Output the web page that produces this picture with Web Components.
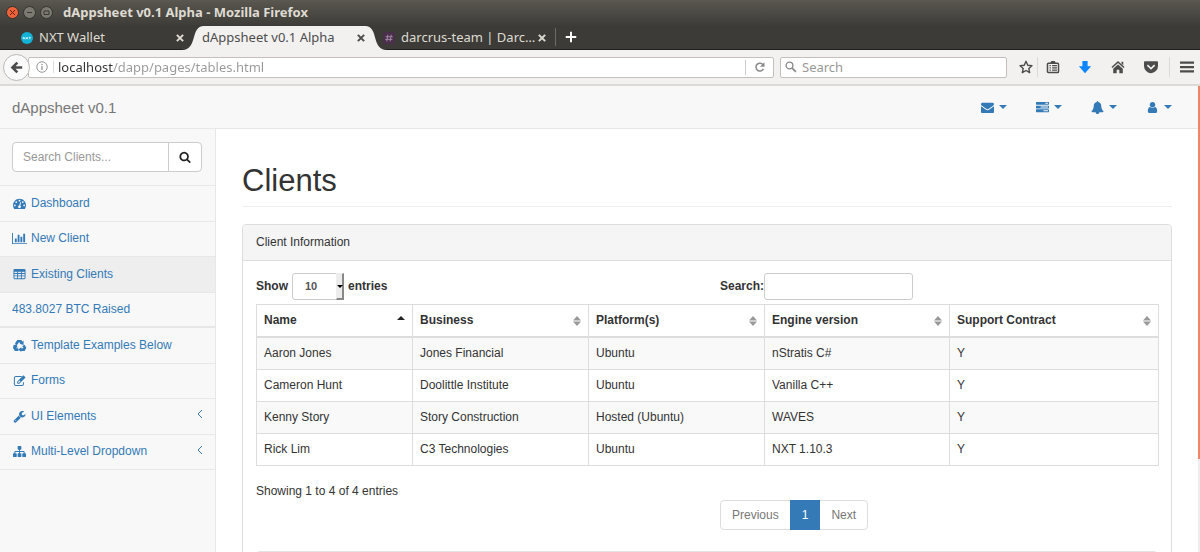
<!DOCTYPE html>
<html lang="en">
<head>
<meta charset="utf-8">
<title>dAppsheet v0.1 Alpha</title>
<style>
    body {
        margin: 0;
        font-family: "Liberation Sans", Arial, sans-serif;
        font-size: 12px;
        line-height: 17px;
        color: #333;
    }
</style>
</head>
<body>
<browser-window>
    <window-title slot="chrome">dAppsheet v0.1 Alpha - Mozilla Firefox</window-title>
    <tab-strip slot="chrome">
        <browser-tab icon="nxt">NXT Wallet</browser-tab>
        <browser-tab active>dAppsheet v0.1 Alpha</browser-tab>
        <browser-tab icon="slack">darcrus-team | Darc…</browser-tab>
    </tab-strip>
    <browser-toolbar slot="chrome" address="localhost/dapp/pages/tables.html"></browser-toolbar>

    <app-navbar>dAppsheet v0.1</app-navbar>
    <app-layout>
        <side-nav slot="side">
            <nav-item icon="dashboard">Dashboard</nav-item>
            <nav-item icon="chart">New Client</nav-item>
            <nav-item icon="table" active>Existing Clients</nav-item>
            <nav-item last>483.8027 BTC Raised</nav-item>
            <nav-item icon="recycle">Template Examples Below</nav-item>
            <nav-item icon="edit">Forms</nav-item>
            <nav-item icon="wrench" expandable>UI Elements</nav-item>
            <nav-item icon="sitemap" expandable>Multi-Level Dropdown</nav-item>
        </side-nav>
        <page-header>Clients</page-header>
        <info-panel>
            <span slot="heading">Client Information</span>
            <client-table></client-table>
        </info-panel>
    </app-layout>
</browser-window>

<script>
const ICONS = {
    envelope: '<path d="M1792 710v794q0 66-47 113t-113 47h-1472q-66 0-113-47t-47-113v-794q44 49 101 87 362 246 497 345 57 42 92.5 65.5t94.5 48 110 24.5h2q51 0 110-24.5t94.5-48 92.5-65.5q170-123 498-345 57-39 100-87zm0-294q0 79-49 151t-122 123q-376 261-468 325-10 7-42.5 31t-54 38.5-52 32.5-57.5 27-50 9h-2q-23 0-50-9t-57.5-27-52-32.5-54-38.5-42.5-31q-91-64-262-182.5t-205-142.5q-62-42-117-115.5t-55-136.5q0-78 41.5-130t118.5-52h1472q65 0 112.5 47t47.5 113z"/>',
    tasks: '<path d="M1024 1408h640v-128h-640v128zm-384-512h1024v-128h-1024v128zm640-512h384v-128h-384v128zm512 832v256q0 26-19 45t-45 19h-1664q-26 0-45-19t-19-45v-256q0-26 19-45t45-19h1664q26 0 45 19t19 45zm0-512v256q0 26-19 45t-45 19h-1664q-26 0-45-19t-19-45v-256q0-26 19-45t45-19h1664q26 0 45 19t19 45zm0-512v256q0 26-19 45t-45 19h-1664q-26 0-45-19t-19-45v-256q0-26 19-45t45-19h1664q26 0 45 19t19 45z"/>',
    bell: '<path d="M1728 1408q0 52-38 90t-90 38h-448q0 106-75 181t-181 75-181-75-75-181h-448q-52 0-90-38t-38-90q50-42 91-88t85-119.5 74.5-158.5 50-206 19.5-260q0-152 117-282.5t307-158.5q-8-19-8-39 0-40 28-68t68-28 68 28 28 68q0 20-8 39 190 28 307 158.5t117 282.5q0 139 19.5 260t50 206 74.5 158.5 85 119.5 91 88z"/>',
    user: '<path d="M1536 1399q0 109-62.5 187t-150.5 78h-854q-88 0-150.5-78t-62.5-187q0-85 8.5-160.5t31.5-152 58.5-131 94-89 134.5-34.5q131 128 313 128t313-128q76 0 134.5 34.5t94 89 58.5 131 31.5 152 8.5 160.5zm-256-887q0 159-112.5 271.5t-271.5 112.5-271.5-112.5-112.5-271.5 112.5-271.5 271.5-112.5 271.5 112.5 112.5 271.5z"/>',
    search: '<path d="M1216 832q0-185-131.5-316.5t-316.5-131.5-316.5 131.5-131.5 316.5 131.5 316.5 316.5 131.5 316.5-131.5 131.5-316.5zm512 832q0 52-38 90t-90 38q-54 0-90-38l-343-342q-179 124-399 124-143 0-273.5-55.5t-225-150-150-225-55.5-273.5 55.5-273.5 150-225 225-150 273.5-55.5 273.5 55.5 225 150 150 225 55.5 273.5q0 220-124 399l343 343q37 37 37 90z"/>',
    dashboard: '<path d="M384 1152q0-53-37.5-90.5t-90.5-37.5-90.5 37.5-37.5 90.5 37.5 90.5 90.5 37.5 90.5-37.5 37.5-90.5zm192-448q0-53-37.5-90.5t-90.5-37.5-90.5 37.5-37.5 90.5 37.5 90.5 90.5 37.5 90.5-37.5 37.5-90.5zm428 481l101-382q6-26-7.5-48.5t-38.5-29.5-48 6.5-30 39.5l-101 382q-60 5-107 43.5t-63 98.5q-20 77 20 146t117 89 146-20 89-117q16-60-6-117t-72-91zm660-33q0-53-37.5-90.5t-90.5-37.5-90.5 37.5-37.5 90.5 37.5 90.5 90.5 37.5 90.5-37.5 37.5-90.5zm-640-640q0-53-37.5-90.5t-90.5-37.5-90.5 37.5-37.5 90.5 37.5 90.5 90.5 37.5 90.5-37.5 37.5-90.5zm448 192q0-53-37.5-90.5t-90.5-37.5-90.5 37.5-37.5 90.5 37.5 90.5 90.5 37.5 90.5-37.5 37.5-90.5zm320 448q0 261-141 483-19 29-54 29h-1402q-35 0-54-29-141-221-141-483 0-182 71-348t191-286 286-191 348-71 348 71 286 191 191 286 71 348z"/>',
    chart: '<path transform="translate(-128)" d="M640 896v512h-256v-512h256zm384-512v1024h-256v-1024h256zm1024 1152v128h-2048v-1536h128v1408h1920zm-640-896v768h-256v-768h256zm384-384v1152h-256v-1152h256z"/>',
    table: '<path fill-rule="evenodd" d="M224 128h1344q160 0 160 160v1088q0 160-160 160h-1344q-160 0-160-160v-1088q0-160 160-160zM192 512v192h384v-192zM704 512v192h384v-192zM1216 512v192h384v-192zM192 832v192h384v-192zM704 832v192h384v-192zM1216 832v192h384v-192zM192 1152v256h384v-256zM704 1152v256h384v-256zM1216 1152v256h384v-256z"/>',
    recycle: '<g fill="none" stroke="currentColor" stroke-width="360"><path d="M420 720l260-410h360l130 210M1440 880l190 340-130 240h-380M740 1460H360l-170-280 130-220"/></g><path d="M1460 240l0 600-560-180zM1140 1120v680l-400-340zM0 900l520-200 100 560z"/>',
    edit: '<path d="M1200 330H400q-210 0-210 210v830q0 210 210 210h830q210 0 210-210v-250" fill="none" stroke="currentColor" stroke-width="140"/><path d="M1440 180l290 290-860 860h-290v-290zM900 890l-190 190v120h120l190-190z" fill-rule="evenodd"/>',
    wrench: '<path d="M448 1472q0-26-19-45t-45-19-45 19-19 45 19 45 45 19 45-19 19-45zm644-420l-682 682q-37 37-90 37-52 0-91-37l-106-108q-38-36-38-90 0-53 38-91l681-681q39 98 114.5 173.5t173.5 114.5zm634-435q0 39-23 106-47 134-164.5 217.5t-258.5 83.5q-185 0-316.5-131.5t-131.5-316.5 131.5-316.5 316.5-131.5q58 0 121.5 16.5t107.5 46.5q16 11 16 28t-16 28l-293 169v224l193 107q5-3 79-48.5t135.5-81 70.5-35.5q15 0 23.5 10t8.5 25z"/>',
    sitemap: '<path d="M1792 1248v320q0 40-28 68t-68 28h-320q-40 0-68-28t-28-68v-320q0-40 28-68t68-28h96v-192h-512v192h96q40 0 68 28t28 68v320q0 40-28 68t-68 28h-320q-40 0-68-28t-28-68v-320q0-40 28-68t68-28h96v-192h-512v192h96q40 0 68 28t28 68v320q0 40-28 68t-68 28h-320q-40 0-68-28t-28-68v-320q0-40 28-68t68-28h96v-192q0-52 38-90t90-38h512v-192h-96q-40 0-68-28t-28-68v-320q0-40 28-68t68-28h320q40 0 68 28t28 68v320q0 40-28 68t-68 28h-96v192h512q52 0 90 38t38 90v192h96q40 0 68 28t28 68z"/>'
}

// browser chrome glyphs, drawn on a 16 unit grid
const GLYPHS = {
    nxt: '<circle cx="8" cy="8" r="8" fill="#12b2d6"/><path d="M3 9.500V7l2 2.500V7M6.500 7l3 2.500M9.500 7l-3 2.500M10.500 7.300H13M11.800 7.300v2.400" fill="none" stroke="#d9f5fa" stroke-width="1.200"/>',
    slack: '<rect width="16" height="16" rx="2" fill="#4a2f4a"/><path d="M6.500 3.500l-1.500 9M11 3.500l-1.500 9M3.500 6.300h9.500M3 9.800h9.500" fill="none" stroke="#a98fae" stroke-width="1.200"/>',
    close: '<path d="M3 3l10 10M13 3L3 13" fill="none" stroke="currentColor" stroke-width="3.200"/>',
    plus: '<path d="M8 1v14M1 8h14" fill="none" stroke="currentColor" stroke-width="2.600"/>',
    back: '<path d="M15 8H4M9 2L3 8l6 6" fill="none" stroke="currentColor" stroke-width="3.200"/>',
    info: '<circle cx="8" cy="8" r="7" fill="none" stroke="currentColor" stroke-width="1.200"/><path d="M8 7v5M8 4v1.700" stroke="currentColor" stroke-width="1.600"/>',
    reload: '<path d="M12.500 10.500a5.200 5.200 0 1 1-.5-5.500" fill="none" stroke="currentColor" stroke-width="2"/><path d="M14 1.500v6H8z"/>',
    find: '<circle cx="6" cy="6" r="4.500" fill="none" stroke="currentColor" stroke-width="1.800"/><path d="M9.500 9.500l5 5" stroke="currentColor" stroke-width="2.400"/>',
    star: '<path d="M8 1.500l2 4.500 4.800.5-3.600 3.200 1 4.800L8 12l-4.200 2.500 1-4.800L1.200 6.500 6 6z" fill="none" stroke="currentColor" stroke-width="1.600" stroke-linejoin="round"/>',
    clipboard: '<rect x="1.700" y="3.700" width="12.600" height="10.600" rx="1" fill="none" stroke="currentColor" stroke-width="1.700"/><path d="M5 3.500l1-2.500h4l1 2.500z"/><path d="M4 6.500h1.500M7 6.500h5.500M4 9h1.500M7 9h5.500M4 11.500h1.500M7 11.500h5.500" stroke="currentColor" stroke-width="1.300"/>',
    download: '<path d="M5 1h6v6h4l-7 8-7-8h4z"/>',
    home: '<path d="M8 1l7.500 7-1.200 1.200L8 3.500 1.700 9.200.5 8zM12 2h2v4l-2-2zM8 5l5.500 5v5h-4v-4h-3v4h-4v-5z"/>',
    pocket: '<path fill-rule="evenodd" d="M1 1.500h14q1 0 1 1V7q0 3.500-2.500 5.500T8 15q-3 0-5.500-2.500T0 7V2.500q0-1 1-1zM3.200 6.500L8 11.200l4.800-4.700-1.300-1.300L8 8.500 4.500 5.200z"/>',
    menu: '<path d="M0 1.800h16v2.600H0zM0 6.800h16v2.600H0zM0 11.800h16v2.600H0z"/>'
}

class AppIcon extends HTMLElement {
    connectedCallback () {
        const name = this.getAttribute("name")
        const fa = name in ICONS
        this.attachShadow({mode: "open"}).innerHTML =
        `
        <style>
            :host {
                display: inline-block;
                flex: none;
                width: 12px;
                height: 12px;
            }
            svg {
                display: block;
                width: 100%;
                height: 100%;
                overflow: visible;
                fill: currentColor;
            }
        </style>
        <svg viewBox="${fa ? "0 0 1792 1792" : "0 0 16 16"}" aria-hidden="true">${fa ? ICONS[name] : GLYPHS[name]}</svg>
        `
    }
}

class BrowserWindow extends HTMLElement {
    constructor () {
        super()
        this.attachShadow({mode: "open"}).innerHTML =
        `
        <style>
            :host {
                display: flex;
                flex-direction: column;
                height: 100vh;
                overflow: hidden;
                background: #3c3b37;
            }
            .viewport {
                flex: 1;
                min-height: 0;
                display: grid;
                grid-template-columns: 1fr 2px;
                background: #fff;
            }
            .page {
                display: flex;
                flex-direction: column;
                min-height: 0;
                overflow: hidden;
            }
            .rail {
                background: #eee;
            }
            .thumb {
                height: 80%;
                background: #ee8567;
            }
        </style>
        <slot name="chrome"></slot>
        <div class="viewport">
            <div class="page"><slot></slot></div>
            <div class="rail"><div class="thumb"></div></div>
        </div>
        `
    }
}

class WindowTitle extends HTMLElement {
    constructor () {
        super()
        this.attachShadow({mode: "open"}).innerHTML =
        `
        <style>
            :host {
                display: flex;
                align-items: center;
                gap: 4px;
                height: 25px;
                padding-left: 6px;
                background: linear-gradient(#5b5a52, #57554d 8%, #3e3d39);
                color: #dfdbd2;
                font: bold 13px/25px "Noto Sans", sans-serif;
            }
            button {
                width: 13px;
                height: 13px;
                padding: 0;
                border: 1px solid #33322e;
                border-radius: 50%;
                background: #7b7970;
                color: #3a3935;
            }
            button.close {
                background: #ee6239;
                color: #6b1f08;
            }
            svg {
                display: block;
                fill: none;
                stroke: currentColor;
            }
            span {
                margin-left: 6px;
            }
        </style>
        <button class="close" aria-label="Close"><svg viewBox="0 0 11 11"><path d="M3 3l5 5M8 3L3 8"/></svg></button>
        <button aria-label="Minimize"><svg viewBox="0 0 11 11"><path d="M3 5.500h5"/></svg></button>
        <button aria-label="Maximize"><svg viewBox="0 0 11 11"><path d="M3 4h5v3.500H3z"/></svg></button>
        <span><slot></slot></span>
        `
    }
}

class TabStrip extends HTMLElement {
    constructor () {
        super()
        this.attachShadow({mode: "open"}).innerHTML =
        `
        <style>
            :host {
                display: flex;
                height: 24px;
                padding-left: 9px;
                border-bottom: 1px solid #21201d;
                background: #3c3b37;
                color: #dfdbd2;
                font: 13px/25px "Noto Sans", sans-serif;
            }
            button {
                display: flex;
                align-items: center;
                margin: 3px 0 3px 3px;
                padding: 0 9px;
                border: 0;
                border-left: 1px solid #6d6b65;
                background: none;
                color: #fff;
            }
        </style>
        <slot></slot>
        <button aria-label="New tab"><app-icon name="plus"></app-icon></button>
        `
    }
}

class BrowserTab extends HTMLElement {
    connectedCallback () {
        const icon = this.getAttribute("icon")
        this.attachShadow({mode: "open"}).innerHTML =
        `
        <style>
            :host {
                position: relative;
                display: flex;
                align-items: center;
                box-sizing: border-box;
                width: 181px;
                height: 25px;
                padding: 0 5px 0 12px;
            }
            :host([active]) {
                color: #4c4c4c;
                z-index: 1;
            }
            .icon {
                margin-right: 6px;
            }
            .label {
                flex: 1;
                overflow: hidden;
                white-space: nowrap;
            }
            button {
                display: flex;
                padding: 0;
                border: 0;
                background: none;
                color: inherit;
            }
            button app-icon {
                width: 10px;
                height: 10px;
            }
            /* tab shape: flat middle with a curved svg on either end */
            .shape {
                display: none;
                position: absolute;
                z-index: -1;
                inset: 0 -16px 0 -8px;
            }
            :host([active]) .shape {
                display: flex;
            }
            .shape svg {
                width: 22px;
                height: 25px;
                fill: #f2f1f0;
            }
            .shape i {
                flex: 1;
                margin: 1px -1px 0;
                background: #f2f1f0;
            }
        </style>
        <span class="shape">
            <svg viewBox="0 0 22 25"><path d="M22 1C8 1 16 25 0 25h22z"/></svg>
            <i></i>
            <svg viewBox="0 0 22 25"><path d="M0 1C14 1 6 25 22 25H0z"/></svg>
        </span>
        ${icon ? `<app-icon class="icon" name="${icon}"></app-icon>` : ""}
        <span class="label"><slot></slot></span>
        <button aria-label="Close tab"><app-icon name="close"></app-icon></button>
        `
    }
}

class BrowserToolbar extends HTMLElement {
    connectedCallback () {
        this.attachShadow({mode: "open"}).innerHTML =
        `
        <style>
            :host {
                display: flex;
                align-items: center;
                height: 34px;
                padding: 0 1px 0 3px;
                border-bottom: 2px solid #dcdad7;
                background: #f2f1f0;
                color: #4c4c4c;
                font: 13px/19px "Noto Sans", sans-serif;
            }
            button {
                display: flex;
                align-items: center;
                justify-content: center;
                padding: 0;
                border: 0;
                background: none;
                color: inherit;
            }
            input {
                flex: 1;
                min-width: 0;
                padding: 0;
                border: 0;
                outline: 0;
                background: none;
                font: inherit;
            }
            input::placeholder {
                color: #999;
            }
            .back {
                z-index: 1;
                width: 27px;
                height: 27px;
                border: 1px solid #bbb8b4;
                border-radius: 50%;
                background: #fafafa;
            }
            .back app-icon {
                width: 13px;
                height: 13px;
            }
            .field {
                display: flex;
                align-items: center;
                box-sizing: border-box;
                height: 21px;
                border: 1px solid #c3c0bc;
                border-radius: 2px;
                background: #fff;
            }
            .address {
                flex: 3;
                gap: 4px;
                margin: 0 6px 0 -2px;
                padding-left: 7px;
                color: #8a8a8a;
            }
            /* the host part of the address is darker than its path */
            .address input {
                color: transparent;
                background: linear-gradient(90deg, #333 55px, #999 55px);
                background-clip: text;
                -webkit-background-clip: text;
            }
            .info {
                padding-right: 5px;
                border-right: 1px solid #ddd;
            }
            .reload {
                width: 28px;
                height: 15px;
                border-left: 1px solid #ccc;
            }
            .find {
                flex: 0 1 227px;
                gap: 5px;
                padding: 0 4px;
                color: #8a8a8a;
            }
            .tools {
                display: flex;
                align-items: center;
                margin-left: 8px;
            }
            .tools button {
                width: 33px;
                height: 20px;
            }
            .tools app-icon {
                width: 14px;
                height: 14px;
            }
            .tools .star {
                width: 23px;
                border-right: 1px solid #dcdad7;
            }
            .tools .clip {
                width: 30px;
            }
            .tools .menu {
                margin-left: 2px;
                width: 30px;
                border-left: 1px solid #dcdad7;
                padding-left: 5px;
            }
            .download {
                color: #0a84ff;
            }
        </style>
        <button class="back" aria-label="Back"><app-icon name="back"></app-icon></button>
        <div class="field address">
            <button class="info" aria-label="Site information"><app-icon name="info"></app-icon></button>
            <input type="text" aria-label="Address" value="${this.getAttribute("address")}">
            <button class="reload" aria-label="Reload"><app-icon name="reload"></app-icon></button>
        </div>
        <div class="field find">
            <app-icon name="find"></app-icon>
            <input type="text" aria-label="Web search" placeholder="Search">
        </div>
        <div class="tools">
            <button class="star" aria-label="Bookmark"><app-icon name="star"></app-icon></button>
            <button class="clip" aria-label="Bookmarks list"><app-icon name="clipboard"></app-icon></button>
            <button class="download" aria-label="Downloads"><app-icon name="download"></app-icon></button>
            <button aria-label="Home"><app-icon name="home"></app-icon></button>
            <button aria-label="Pocket"><app-icon name="pocket"></app-icon></button>
            <button class="menu" aria-label="Menu"><app-icon name="menu"></app-icon></button>
        </div>
        `
    }
}

class AppNavbar extends HTMLElement {
    constructor () {
        super()
        this.attachShadow({mode: "open"}).innerHTML =
        `
        <style>
            :host {
                display: flex;
                align-items: center;
                justify-content: space-between;
                height: 42px;
                padding: 0 13px 0 12px;
                border-bottom: 1px solid #e7e7e7;
                background: #f8f8f8;
            }
            .brand {
                color: #777;
                font-size: 15px;
                text-decoration: none;
            }
            nav {
                display: flex;
                gap: 3px;
            }
            nav button {
                display: flex;
                align-items: center;
                gap: 5px;
                padding: 13px;
                border: 0;
                background: none;
                color: #337ab7;
            }
            nav app-icon {
                width: 13px;
                height: 13px;
            }
            nav button::after {
                content: "";
                border: 4px solid transparent;
                border-top-color: currentColor;
                border-bottom: 0;
            }
        </style>
        <a class="brand" href="#"><slot></slot></a>
        <nav>
            <button aria-label="Messages"><app-icon name="envelope"></app-icon></button>
            <button aria-label="Tasks"><app-icon name="tasks"></app-icon></button>
            <button aria-label="Alerts"><app-icon name="bell"></app-icon></button>
            <button aria-label="Account"><app-icon name="user"></app-icon></button>
        </nav>
        `
    }
}

class AppLayout extends HTMLElement {
    constructor () {
        super()
        this.attachShadow({mode: "open"}).innerHTML =
        `
        <style>
            :host {
                flex: 1;
                display: grid;
                grid-template-columns: 216px 1fr;
                min-height: 0;
            }
            aside {
                background: #f8f8f8;
                border-right: 1px solid #e7e7e7;
            }
            main {
                min-width: 0;
                padding: 0 26px;
                overflow: hidden;
            }
        </style>
        <aside><slot name="side"></slot></aside>
        <main><slot></slot></main>
        `
    }
}

class SideNav extends HTMLElement {
    constructor () {
        super()
        this.attachShadow({mode: "open"}).innerHTML =
        `
        <style>
            :host {
                display: block;
            }
            form {
                display: flex;
                padding: 13px 13px 13px 12px;
                border-bottom: 1px solid #e7e7e7;
            }
            input {
                flex: 1;
                min-width: 0;
                box-sizing: border-box;
                height: 30px;
                padding: 0 10px;
                border: 1px solid #ccc;
                border-radius: 4px 0 0 4px;
                background: #fff;
                font: inherit;
            }
            input::placeholder {
                color: #999;
            }
            button {
                display: grid;
                place-items: center;
                width: 34px;
                margin-left: -1px;
                padding: 0;
                border: 1px solid #ccc;
                border-radius: 0 4px 4px 0;
                background: #fff;
                color: #222;
            }
            nav {
                display: grid;
                grid-auto-rows: 1fr;
                min-height: 284px;
            }
        </style>
        <form>
            <input type="text" placeholder="Search Clients..." aria-label="Search Clients">
            <button type="button" aria-label="Search"><app-icon name="search"></app-icon></button>
        </form>
        <nav><slot></slot></nav>
        `
    }
}

class NavItem extends HTMLElement {
    connectedCallback () {
        const icon = this.getAttribute("icon")
        this.attachShadow({mode: "open"}).innerHTML =
        `
        <style>
            :host {
                display: block;
                border-bottom: 1px solid #e7e7e7;
            }
            :host([last]) {
                border-bottom-width: 2px;
            }
            a {
                display: flex;
                align-items: center;
                gap: 5px;
                box-sizing: border-box;
                height: 100%;
                padding: 0 12px;
                color: #337ab7;
                text-decoration: none;
            }
            :host([active]) a {
                background: #eee;
            }
            app-icon {
                width: 13px;
                height: 13px;
                margin-left: 1px;
            }
            .arrow {
                width: 4px;
                height: 8px;
                margin: 0 1px 4px auto;
                fill: none;
                stroke: currentColor;
            }
        </style>
        <a href="#">
            ${icon ? `<app-icon name="${icon}"></app-icon>` : ""}
            <span><slot></slot></span>
            ${this.hasAttribute("expandable") ? '<svg class="arrow" viewBox="0 0 4 8"><path d="M4 0L0 4l4 4"/></svg>' : ""}
        </a>
        `
    }
}

class PageHeader extends HTMLElement {
    constructor () {
        super()
        this.attachShadow({mode: "open"}).innerHTML =
        `
        <style>
            :host {
                display: block;
                margin: 35px 0 17px;
                padding-bottom: 8px;
                border-bottom: 1px solid #eee;
            }
            h1 {
                margin: 0;
                font-size: 31px;
                font-weight: 500;
                line-height: 34px;
            }
        </style>
        <h1><slot></slot></h1>
        `
    }
}

class InfoPanel extends HTMLElement {
    constructor () {
        super()
        this.attachShadow({mode: "open"}).innerHTML =
        `
        <style>
            :host {
                display: block;
                border: 1px solid #ddd;
                border-radius: 4px;
                background: #fff;
            }
            header {
                padding: 9px 13px;
                border-bottom: 1px solid #ddd;
                border-radius: 3px 3px 0 0;
                background: #f5f5f5;
            }
            .body {
                padding: 12px 13px;
            }
            .well {
                min-height: 80px;
                margin-top: 21px;
                border: 1px solid #e3e3e3;
                border-radius: 4px;
                background: #f5f5f5;
            }
        </style>
        <header><slot name="heading"></slot></header>
        <div class="body">
            <slot></slot>
            <div class="well"></div>
        </div>
        `
    }
}

class ClientTable extends HTMLElement {
    constructor () {
        super()
        this.columns = ["Name", "Business", "Platform(s)", "Engine version", "Support Contract"]
        this.widths = [156, 176, 176, 185, 209]
        this.rows = [
            ["Aaron Jones", "Jones Financial", "Ubuntu", "nStratis C#", "Y"],
            ["Cameron Hunt", "Doolittle Institute", "Ubuntu", "Vanilla C++", "Y"],
            ["Kenny Story", "Story Construction", "Hosted (Ubuntu)", "WAVES", "Y"],
            ["Rick Lim", "C3 Technologies", "Ubuntu", "NXT 1.10.3", "Y"]
        ]
        this.root = this.attachShadow({mode: "open"})
    }

    connectedCallback () {
        this.render()
    }

    sortIcon (index) {
        return index === 0
            ? '<svg class="sorted" viewBox="0 0 8 10"><path d="M0 5l4-4 4 4z"/></svg>'
            : '<svg viewBox="0 0 8 10"><path d="M0 4.500L4 0l4 4.500zM0 5.500h8L4 10z"/></svg>'
    }

    render () {
        this.root.innerHTML =
        `
        <style>
            :host {
                display: block;
            }
            .row {
                display: grid;
                grid-template-columns: 1fr 1fr;
                gap: 26px;
            }
            .controls {
                font-weight: bold;
                margin-bottom: 4px;
            }
            .controls > div {
                display: flex;
                align-items: center;
                gap: 4px;
            }
            .controls .filter {
                gap: 0;
            }
            .length {
                display: grid;
            }
            .length > * {
                grid-area: 1 / 1;
            }
            select, input {
                box-sizing: border-box;
                height: 27px;
                border: 1px solid #ccc;
                border-radius: 3px;
                background: #fff;
                color: #555;
                font: inherit;
            }
            select {
                width: 52px;
                padding: 0 12px;
                font-size: 11px;
                appearance: none;
            }
            input {
                width: 149px;
                padding: 0 8px;
            }
            .arrow {
                display: grid;
                place-items: center;
                justify-self: end;
                width: 5px;
                border: 1px solid #eee;
                border-right: 2px solid #888;
                border-bottom: 2px solid #888;
                background: #ececec;
                pointer-events: none;
            }
            .arrow svg {
                width: 6px;
                height: 3px;
                fill: #000;
            }
            table {
                width: 100%;
                table-layout: fixed;
                border-collapse: collapse;
                border: 1px solid #ddd;
            }
            th, td {
                padding: 7px;
                border: 1px solid #ddd;
                text-align: left;
            }
            th {
                border-bottom-width: 2px;
            }
            th button {
                display: flex;
                align-items: center;
                justify-content: space-between;
                width: 100%;
                padding: 0;
                border: 0;
                background: none;
                color: inherit;
                font: inherit;
            }
            th svg {
                width: 8px;
                height: 10px;
                fill: #999;
            }
            th .sorted {
                fill: #222;
                margin-bottom: 2px;
            }
            tbody tr:nth-child(odd) {
                background: #f9f9f9;
            }
            .footer {
                align-items: start;
                margin-top: 17px;
            }
            nav {
                display: flex;
                margin-top: 17px;
            }
            nav a {
                padding: 5px 11px;
                margin-left: -1px;
                border: 1px solid #ddd;
                background: #fff;
                color: #777;
                text-decoration: none;
                line-height: 18px;
            }
            nav a:first-child {
                margin-left: 0;
                border-radius: 4px 0 0 4px;
            }
            nav a:last-child {
                border-radius: 0 4px 4px 0;
            }
            nav a[aria-current] {
                z-index: 1;
                border-color: #337ab7;
                background: #337ab7;
                color: #fff;
            }
        </style>
        <div class="row controls">
            <div>
                <label for="length">Show</label>
                <div class="length">
                    <select id="length"><option>10</option><option>25</option><option>50</option></select>
                    <span class="arrow"><svg viewBox="0 0 6 3"><path d="M0 0h6L3 3z"/></svg></span>
                </div>
                <span>entries</span>
            </div>
            <div class="filter">
                <label for="filter">Search:</label>
                <input id="filter" type="search">
            </div>
        </div>
        <table>
            <colgroup>${this.widths.map(w => `<col style="width: ${w}px">`).join("")}</colgroup>
            <thead>
                <tr>${this.columns.map((name, i) => `<th><button>${name}${this.sortIcon(i)}</button></th>`).join("")}</tr>
            </thead>
            <tbody>
                ${this.rows.map(row => `<tr>${row.map(cell => `<td>${cell}</td>`).join("")}</tr>`).join("")}
            </tbody>
        </table>
        <div class="row footer">
            <div>Showing 1 to 4 of 4 entries</div>
            <nav>
                <a href="#">Previous</a>
                <a href="#" aria-current="page">1</a>
                <a href="#">Next</a>
            </nav>
        </div>
        `
    }
}

customElements.define("app-icon", AppIcon)
customElements.define("browser-window", BrowserWindow)
customElements.define("window-title", WindowTitle)
customElements.define("tab-strip", TabStrip)
customElements.define("browser-tab", BrowserTab)
customElements.define("browser-toolbar", BrowserToolbar)
customElements.define("app-navbar", AppNavbar)
customElements.define("app-layout", AppLayout)
customElements.define("side-nav", SideNav)
customElements.define("nav-item", NavItem)
customElements.define("page-header", PageHeader)
customElements.define("info-panel", InfoPanel)
customElements.define("client-table", ClientTable)
</script>
</body>
</html>
